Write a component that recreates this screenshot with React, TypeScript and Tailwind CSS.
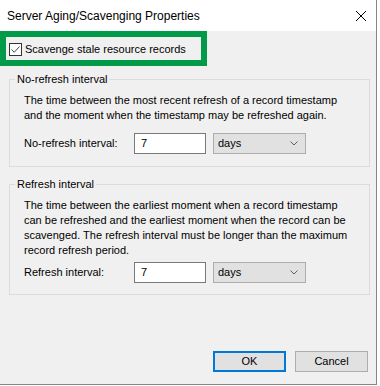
import { ReactNode } from "react";

const font = { fontFamily: '"Liberation Sans", Arial, sans-serif' };

function GroupBox({ title, children, className }: { title: string; children: ReactNode; className?: string }) {
  return (
    <div className={`relative ml-[9px] w-[361px] border border-[#dcdcdc] pl-[14px] ${className ?? ""}`}>
      <span className="absolute left-[5px] top-[-8px] bg-[#f0f0f0] px-[2px] leading-[15px] text-black">
        {title}
      </span>
      {children}
    </div>
  );
}

function IntervalRow({ label }: { label: string }) {
  return (
    <div className="flex h-[21px] items-center">
      <span className="w-[110px] text-black">{label}</span>
      <div className="flex h-[21px] w-[72px] items-center border border-[#7a7a7a] bg-white pl-[6px] text-black">
        7
      </div>
      <div className="ml-[7px] flex h-[21px] w-[93px] items-center justify-between border border-[#adadad] bg-[#e1e1e1] pl-[4px] pr-[7px] text-black">
        <span>days</span>
        <svg width="8" height="5" viewBox="0 0 8 5" fill="none">
          <path d="M0.5 0.5 L4 4 L7.5 0.5" stroke="#606060" strokeWidth="1" />
        </svg>
      </div>
    </div>
  );
}

export default function App() {
  return (
    <div className="h-[386px] w-[380px] bg-white text-[11px]" style={font}>
      <div className="flex h-[385px] w-[377px] flex-col border-b border-r border-[#858585] bg-[#f0f0f0]">
        {/* title bar */}
        <div className="flex h-[31px] shrink-0 items-center justify-between bg-white pl-[7px] pr-[10px]">
          <span className="text-[12px] text-black">Server Aging/Scavenging Properties</span>
          <svg width="10" height="10" viewBox="0 0 10 10" fill="none">
            <path d="M0 0 L10 10 M10 0 L0 10" stroke="#000" strokeWidth="1" />
          </svg>
        </div>

        {/* highlighted checkbox */}
        <div className="flex h-[35px] w-[207px] shrink-0 items-start border-[6px] border-[#009a49] pl-[3px] pt-[6px]">
          <div className="flex h-[13px] items-center gap-[3px]">
            <div className="flex h-[13px] w-[13px] items-center justify-center border border-[#333] bg-white">
              <svg width="11" height="11" viewBox="0 0 11 11" fill="none">
                <path d="M1.5 5.5 L4.2 8.3 L9.5 2.5" stroke="#444" strokeWidth="1" />
              </svg>
            </div>
            <span className="text-black">Scavenge stale resource records</span>
          </div>
        </div>

        <GroupBox title="No-refresh interval" className="mt-[13px] pb-[12px] pt-[13px]">
          <p className="leading-[15px] text-black">
            The time between the most recent refresh of a record timestamp
            <br />
            and the moment when the timestamp may be refreshed again.
          </p>
          <div className="mt-[10px]">
            <IntervalRow label="No-refresh interval:" />
          </div>
        </GroupBox>

        <GroupBox title="Refresh interval" className="mt-[17px] pb-[11px] pt-[13px]">
          <p className="leading-[15px] text-black">
            The time between the earliest moment when a record timestamp
            <br />
            can be refreshed and the earliest moment when the record can be
            <br />
            scavenged. The refresh interval must be longer than the maximum
            <br />
            record refresh period.
          </p>
          <div className="mt-[4px]">
            <IntervalRow label="Refresh interval:" />
          </div>
        </GroupBox>

        <div className="mt-auto mb-[12px] flex justify-end gap-[9px] pr-[8px]">
          <button className="flex h-[21px] w-[73px] items-center justify-center border-2 border-[#0078d7] bg-[#e1e1e1] text-black">
            OK
          </button>
          <button className="flex h-[21px] w-[73px] items-center justify-center border border-[#adadad] bg-[#e1e1e1] text-black">
            Cancel
          </button>
        </div>
      </div>
    </div>
  );
}
